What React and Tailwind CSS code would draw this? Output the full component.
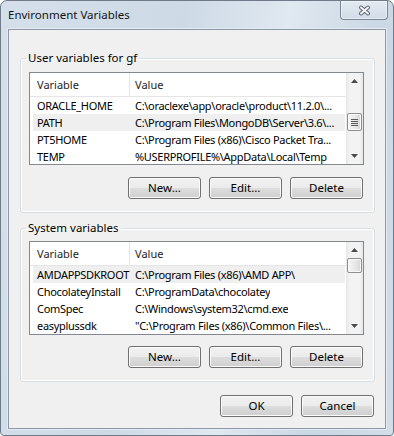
import React from "react";

const userRows = [
  ["ORACLE_HOME", "C:\\oraclexe\\app\\oracle\\product\\11.2.0\\..."],
  ["PATH", "C:\\Program Files\\MongoDB\\Server\\3.6\\..."],
  ["PT5HOME", "C:\\Program Files (x86)\\Cisco Packet Tra..."],
  ["TEMP", "%USERPROFILE%\\AppData\\Local\\Temp"],
];

const sysRows = [
  ["AMDAPPSDKROOT", "C:\\Program Files (x86)\\AMD APP\\"],
  ["ChocolateyInstall", "C:\\ProgramData\\chocolatey"],
  ["ComSpec", "C:\\Windows\\system32\\cmd.exe"],
  ["easyplussdk", "\"C:\\Program Files (x86)\\Common Files\\..."],
];

function Btn({ children }) {
  return (
    <button className="w-[73px] h-[22px] rounded-[3px] border border-[#707070] bg-[linear-gradient(#f2f2f2_0%,#ebebeb_50%,#dddddd_50%,#cfcfcf_100%)] shadow-[inset_0_0_0_1px_#fbfbfb] text-[11.5px] leading-none text-black flex items-center justify-center">
      {children}
    </button>
  );
}

function Arrow({ down }) {
  return (
    <svg width="7" height="4" viewBox="0 0 7 4">
      {down ? (
        <polygon points="0,0 7,0 3.5,4" fill="#4a4a4a" />
      ) : (
        <polygon points="0,4 7,4 3.5,0" fill="#4a4a4a" />
      )}
    </svg>
  );
}

function ScrollBar({ sys }) {
  return (
    <div className="w-[17px] h-full shrink-0 flex flex-col bg-[linear-gradient(90deg,#e6e6e6,#f3f3f3_20%,#f3f3f3_80%,#e6e6e6)]">
      <div className="h-[16px] flex items-center justify-center shrink-0">
        <Arrow />
      </div>
      {sys ? (
        <div className="mx-[1px] h-[15px] rounded-[2px] border border-[#8f8f8f] bg-[linear-gradient(90deg,#f5f5f5,#e9e9e9_50%,#d6d6d6)] shadow-[inset_0_0_0_1px_#fafafa]" />
      ) : (
        <div className="mx-[1px] mt-[24px] h-[18px] rounded-[2px] border border-[#8f8f8f] bg-[linear-gradient(90deg,#f5f5f5,#e9e9e9_50%,#d6d6d6)] shadow-[inset_0_0_0_1px_#fafafa] flex flex-col items-center justify-center gap-[1px]">
          <div className="w-[7px] h-[1px] bg-[#5a5a5a]" />
          <div className="w-[7px] h-[1px] bg-[#5a5a5a]" />
          <div className="w-[7px] h-[1px] bg-[#5a5a5a]" />
          <div className="w-[7px] h-[1px] bg-[#5a5a5a]" />
        </div>
      )}
      <div className="flex-1" />
      <div className="h-[17px] flex items-center justify-center shrink-0">
        <Arrow down />
      </div>
    </div>
  );
}

function VarList({ rows, selected, sys }) {
  return (
    <div
      className={
        sys
          ? "ml-[8px] mr-[10px] h-[94px] border border-[#828790] bg-white flex overflow-hidden"
          : "ml-[8px] mr-[10px] h-[93px] border border-[#828790] bg-white flex overflow-hidden"
      }
    >
      <div className="flex-1 min-w-0 flex flex-col">
        <div className="h-[24px] shrink-0 flex border-b border-[#e5e5e5] text-[#1e1e1e]">
          <div className="w-[100px] h-full flex items-center pl-[7px] border-r border-[#e5e5e5]">
            Variable
          </div>
          <div className="flex items-center pl-[5px]">Value</div>
        </div>
        {rows.map((r, i) => (
          <div
            key={r[0]}
            className={
              i === selected
                ? "h-[17px] shrink-0 flex items-center ml-[3px] mr-[1px] bg-[#efefef] tracking-[-0.3px]"
                : "h-[17px] shrink-0 flex items-center ml-[3px] mr-[1px] tracking-[-0.3px]"
            }
          >
            <div className="w-[97px] shrink-0 pl-[4px] whitespace-nowrap overflow-hidden">{r[0]}</div>
            <div className="pl-[5px] whitespace-nowrap overflow-hidden">{r[1]}</div>
          </div>
        ))}
      </div>
      <ScrollBar sys={sys} />
    </div>
  );
}

export default function App() {
  return (
    <div className="w-[394px] h-[436px] overflow-hidden font-['Noto_Sans',sans-serif] text-[11px] leading-[16px] text-black">
      <div className="w-full h-full flex flex-col rounded-t-[7px] rounded-b-[4px] border border-[#6f7b88] bg-[linear-gradient(100deg,#d4dfea_0%,#cddae6_40%,#e0e8f0_62%,#cad7e4_82%,#d2dde8_100%)]">
        <div className="h-[28px] shrink-0 flex items-start justify-between">
          <span className="pl-[7px] pt-[6px] text-[11.5px] text-[#141414]">Environment Variables</span>
          <div className="w-[48px] h-[19px] mr-[5px] rounded-b-[4px] border border-t-0 border-[#7c8795] bg-[linear-gradient(#e3eaf1,#d2dce7)] shadow-[inset_0_0_0_1px_rgba(255,255,255,0.45)] flex items-center justify-center">
            <svg width="13" height="11" viewBox="0 0 13 11">
              <path d="M3 2.5 L10 8.5 M10 2.5 L3 8.5" stroke="#5d6876" strokeWidth="4" strokeLinecap="round" fill="none" />
              <path d="M3 2.5 L10 8.5 M10 2.5 L3 8.5" stroke="#f4f6f8" strokeWidth="2" strokeLinecap="round" fill="none" />
            </svg>
          </div>
        </div>
        <div className="flex-1 min-w-0 mx-[7px] mb-[6px] border border-[#8d99a7] shadow-[0_0_0_1px_#e4ebf2] bg-[#f0f0f0] flex flex-col">
          <fieldset className="min-w-0 mt-[20px] ml-[11px] mr-[10px] pt-[6px] pb-[13px] border border-[#d5dfe5] rounded-[3px] shadow-[inset_0_0_0_1px_#ffffff]">
            <legend className="ml-[5px] px-[2px] leading-[16px] text-[11.5px]">User variables for gf</legend>
            <VarList rows={userRows} selected={1} />
            <div className="mt-[12px] mr-[11px] flex justify-end gap-[8px]">
              <Btn>New...</Btn>
              <Btn>Edit...</Btn>
              <Btn>Delete</Btn>
            </div>
          </fieldset>
          <fieldset className="min-w-0 mt-[7px] ml-[11px] mr-[10px] pt-[5px] pb-[13px] border border-[#d5dfe5] rounded-[3px] shadow-[inset_0_0_0_1px_#ffffff]">
            <legend className="ml-[5px] px-[2px] leading-[16px] text-[11.5px]">System variables</legend>
            <VarList rows={sysRows} selected={0} sys />
            <div className="mt-[11px] mr-[11px] flex justify-end gap-[8px]">
              <Btn>New...</Btn>
              <Btn>Edit...</Btn>
              <Btn>Delete</Btn>
            </div>
          </fieldset>
          <div className="mt-[13px] mr-[11px] flex justify-end gap-[8px]">
            <Btn>OK</Btn>
            <Btn>Cancel</Btn>
          </div>
        </div>
      </div>
    </div>
  );
}
